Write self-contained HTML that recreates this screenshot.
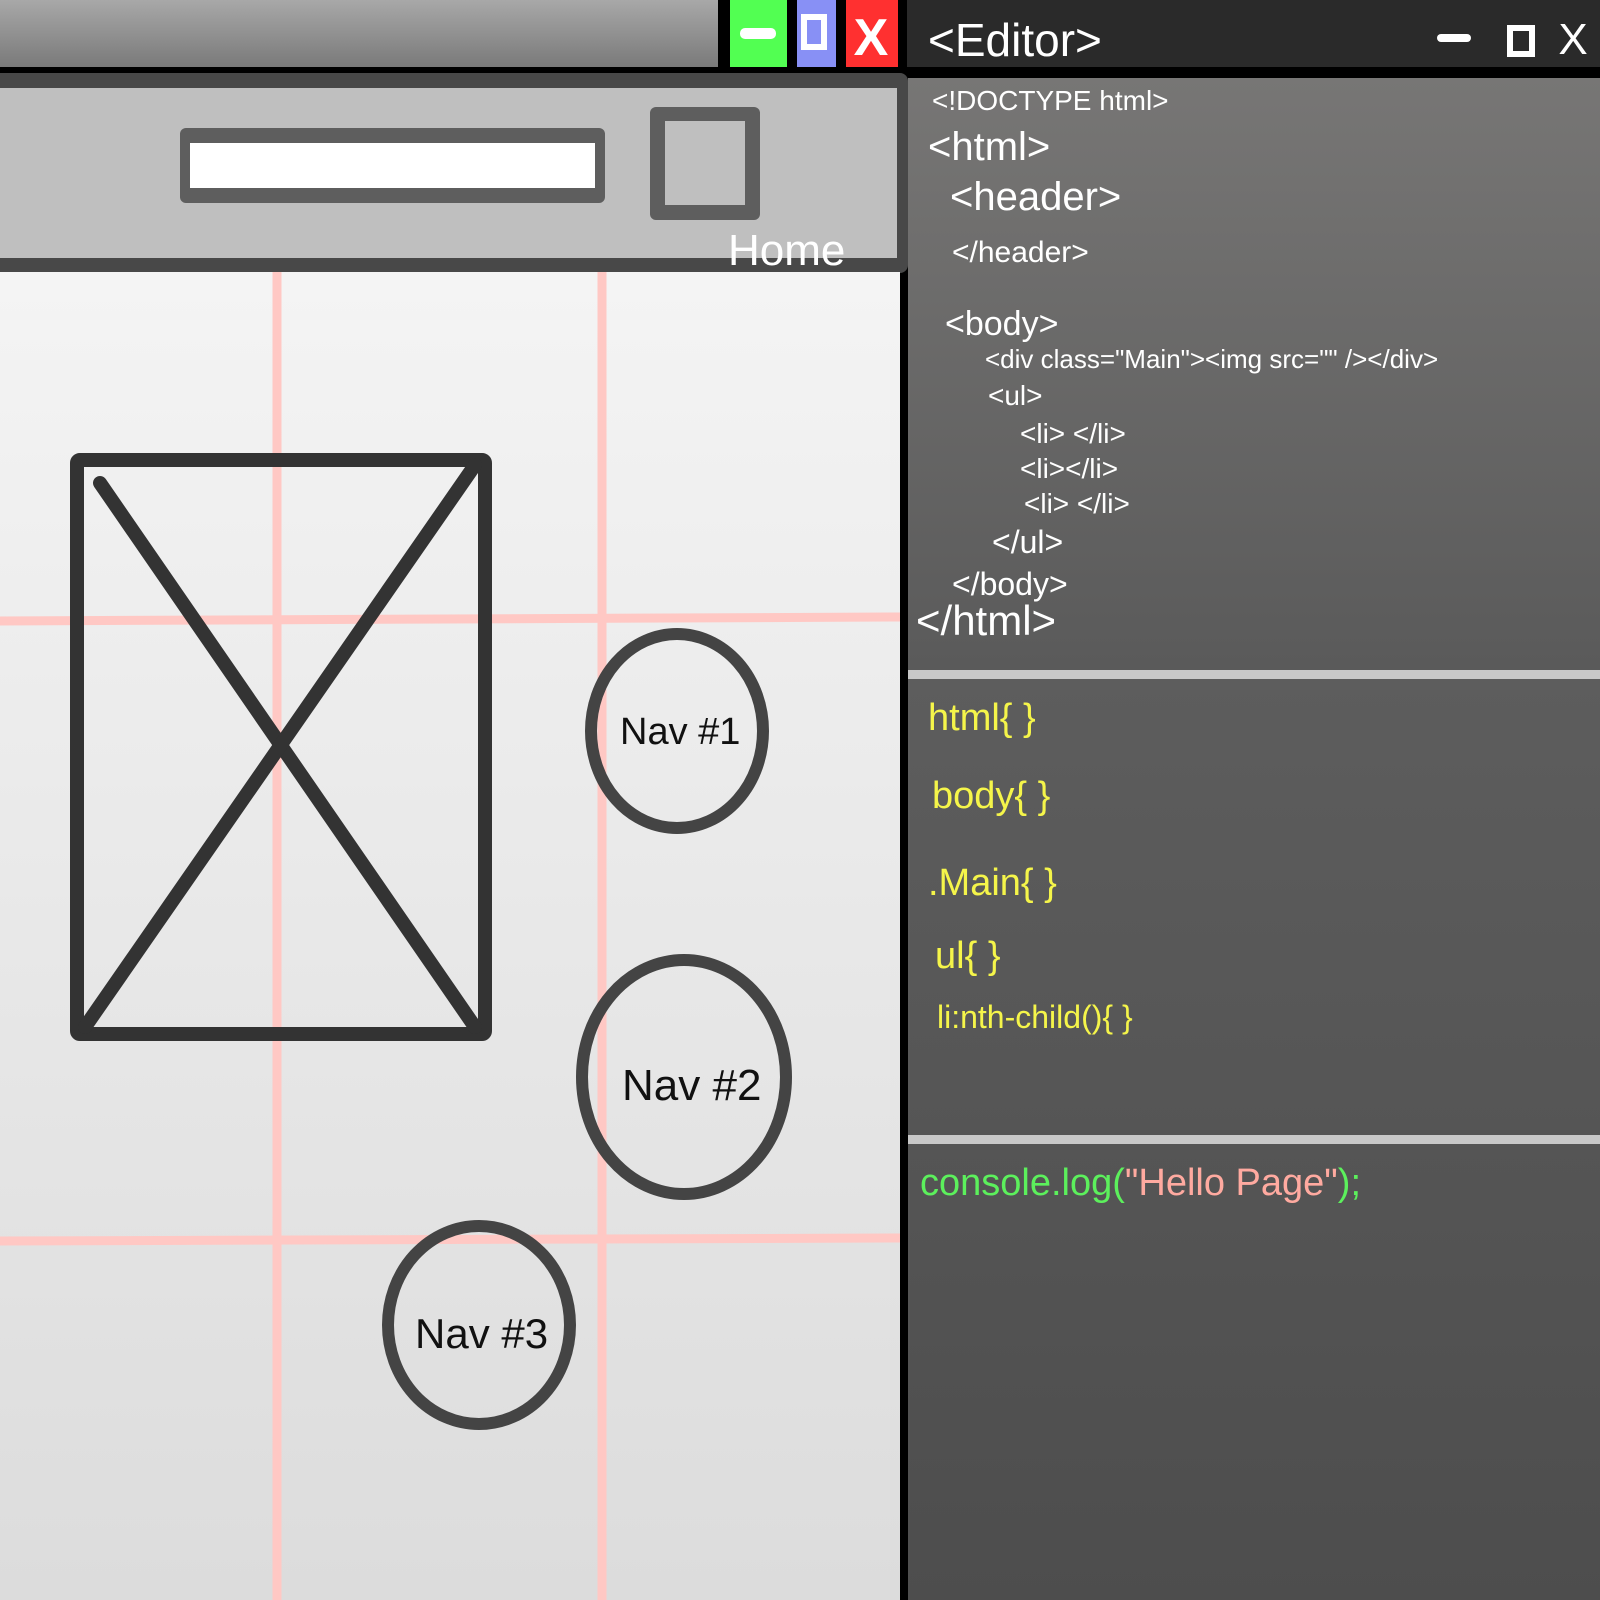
<!DOCTYPE html>
<html><head><style>
body{margin:0;width:1600px;height:1600px;overflow:hidden;background:#000;font-family:"Liberation Sans",sans-serif}
</style></head><body>
<svg width="1600" height="1600" xmlns="http://www.w3.org/2000/svg" style="position:absolute;left:0;top:0">
<defs>
<linearGradient id="tb" x1="0" y1="0" x2="0" y2="1"><stop offset="0" stop-color="#a8a8a8"/><stop offset="1" stop-color="#7a7a7a"/></linearGradient>
<linearGradient id="ct" x1="0" y1="0" x2="0" y2="1"><stop offset="0" stop-color="#f4f4f4"/><stop offset="1" stop-color="#dcdcdc"/></linearGradient>
<linearGradient id="e1" x1="0" y1="0" x2="0" y2="1"><stop offset="0" stop-color="#777675"/><stop offset="1" stop-color="#5a5a5a"/></linearGradient>
<linearGradient id="e2" x1="0" y1="0" x2="0" y2="1"><stop offset="0" stop-color="#5d5d5d"/><stop offset="1" stop-color="#555"/></linearGradient>
<linearGradient id="e3" x1="0" y1="0" x2="0" y2="1"><stop offset="0" stop-color="#555"/><stop offset="1" stop-color="#4d4d4d"/></linearGradient>
</defs>
<rect x="0" y="0" width="718" height="67" fill="url(#tb)"/>
<rect x="730" y="0" width="57" height="67" fill="#52ff52"/>
<rect x="797" y="0" width="39" height="67" fill="#8890f5"/>
<rect x="846" y="0" width="52" height="67" fill="#ff3030"/>
<rect x="740" y="28" width="36" height="11" rx="5" fill="#fff"/>
<rect x="804" y="17" width="20" height="30" fill="none" stroke="#fff" stroke-width="6"/>
<text x="871" y="55" font-size="52" fill="#fff" text-anchor="middle" font-weight="bold">X</text>
<rect x="907" y="0" width="693" height="67" fill="#2a2a2a"/>
<text x="928" y="56" font-size="46" fill="#fff">&lt;Editor&gt;</text>
<rect x="1437" y="34" width="34" height="8" rx="4" fill="#fff"/>
<rect x="1510" y="28" width="22" height="26" fill="none" stroke="#fff" stroke-width="6"/>
<text x="1573" y="54" font-size="44" fill="#fff" text-anchor="middle">X</text>
<!-- left header -->
<rect x="-10" y="73" width="918" height="200" rx="8" fill="#484848"/>
<rect x="0" y="88" width="897" height="170" fill="#bfbfbf"/>
<rect x="180" y="128" width="425" height="75" rx="6" fill="#5e5e5e"/>
<rect x="190" y="143" width="405" height="45" fill="#fff"/>
<rect x="650" y="107" width="110" height="113" rx="6" fill="#5e5e5e"/>
<rect x="665" y="121" width="80" height="84" fill="#bfbfbf"/>
<text x="728" y="265" font-size="44" fill="#fff">Home</text>
<!-- content -->
<rect x="0" y="272" width="900" height="1328" fill="url(#ct)"/>
<g stroke="#ffc8c4" stroke-width="9">
<line x1="277" y1="272" x2="277" y2="1600"/>
<line x1="602" y1="272" x2="602" y2="1600"/>
<line x1="0" y1="621" x2="900" y2="617"/>
<line x1="0" y1="1241" x2="900" y2="1238"/>
</g>
<g stroke="#333" stroke-width="14" fill="none" stroke-linecap="round">
<rect x="77" y="460" width="408" height="574" rx="3"/>
<line x1="100" y1="483" x2="475" y2="1027"/>
<line x1="475" y1="465" x2="85" y2="1027"/>
</g>
<g stroke="#444" stroke-width="12" fill="none">
<ellipse cx="677" cy="731" rx="86" ry="97"/>
<ellipse cx="684" cy="1077" rx="102" ry="117"/>
<ellipse cx="479" cy="1325" rx="91" ry="99"/>
</g>
<g font-size="38" fill="#111">
<text x="620" y="744">Nav #1</text>
<text x="622" y="1100" font-size="44">Nav #2</text>
<text x="415" y="1348" font-size="42">Nav #3</text>
</g>
<!-- editor panels -->
<rect x="908" y="78" width="692" height="592" fill="url(#e1)"/>
<rect x="908" y="670" width="692" height="9" fill="#c8c8c8"/>
<rect x="908" y="679" width="692" height="456" fill="url(#e2)"/>
<rect x="908" y="1135" width="692" height="9" fill="#c8c8c8"/>
<rect x="908" y="1144" width="692" height="456" fill="url(#e3)"/>
<g fill="#fff">
<text x="932" y="110" font-size="28">&lt;!DOCTYPE html&gt;</text>
<text x="928" y="160" font-size="40">&lt;html&gt;</text>
<text x="950" y="210" font-size="40">&lt;header&gt;</text>
<text x="952" y="262" font-size="30">&lt;/header&gt;</text>
<text x="945" y="335" font-size="34">&lt;body&gt;</text>
<text x="985" y="368" font-size="26">&lt;div class="Main"&gt;&lt;img src="" /&gt;&lt;/div&gt;</text>
<text x="988" y="405" font-size="28">&lt;ul&gt;</text>
<text x="1020" y="443" font-size="28">&lt;li&gt; &lt;/li&gt;</text>
<text x="1020" y="478" font-size="28">&lt;li&gt;&lt;/li&gt;</text>
<text x="1024" y="513" font-size="28">&lt;li&gt; &lt;/li&gt;</text>
<text x="992" y="553" font-size="32">&lt;/ul&gt;</text>
<text x="952" y="595" font-size="32">&lt;/body&gt;</text>
<text x="916" y="635" font-size="42">&lt;/html&gt;</text>
</g>
<g fill="#f5f54a">
<text x="928" y="730" font-size="38">html{ }</text>
<text x="932" y="808" font-size="38">body{ }</text>
<text x="928" y="895" font-size="38">.Main{ }</text>
<text x="935" y="968" font-size="38">ul{ }</text>
<text x="937" y="1028" font-size="32">li:nth-child(){ }</text>
</g>
<text x="920" y="1195" font-size="38" fill="#5cf05c">console.log(<tspan fill="#ffaaa0">"Hello Page"</tspan>);</text>
</svg>
</body></html>
